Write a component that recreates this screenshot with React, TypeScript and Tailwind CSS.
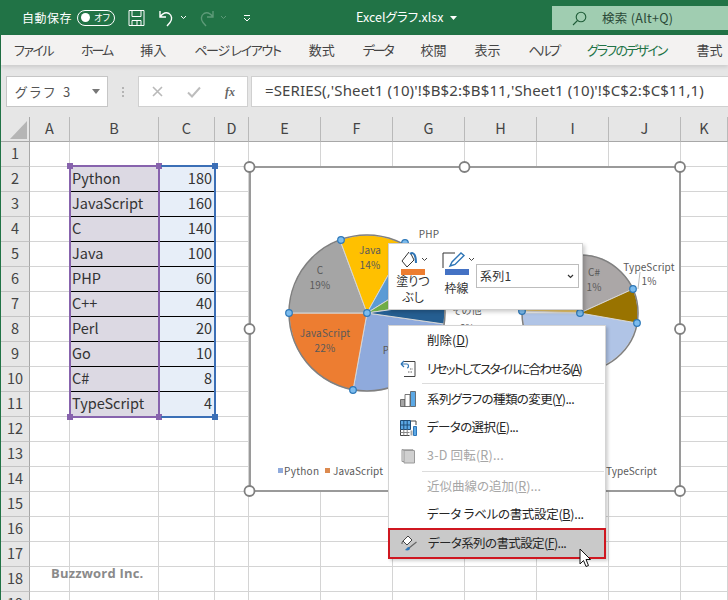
import React from "react";

const colWidths = ["A", "B", "C", "D", "E", "F", "G", "H", "I", "J", "K"];
const data: [string, string][] = [
  ["Python", "180"],
  ["JavaScript", "160"],
  ["C", "140"],
  ["Java", "100"],
  ["PHP", "60"],
  ["C++", "40"],
  ["Perl", "20"],
  ["Go", "10"],
  ["C#", "8"],
  ["TypeScript", "4"],
];
const rows = Array.from({ length: 19 }, (_, i) => i + 1);
const blanks = Array.from({ length: 8 }, (_, i) => i);
const tabs: [string, string][] = [
  ["ファイル", "tracking-[-1.5px]"],
  ["ホーム", "tracking-[-2px]"],
  ["挿入", ""],
  ["ページ レイアウト", "tracking-[-1.3px]"],
  ["数式", ""],
  ["データ", "tracking-[-2.2px]"],
  ["校閲", ""],
  ["表示", ""],
  ["ヘルプ", "tracking-[-2.3px]"],
  ["グラフのデザイン", "tracking-[-1.8px] text-[#217346]"],
  ["書式", "ml-[2px]"],
];

const blueDots: [number, number][] = [
  [91, 73], [39, 146], [103, 223], [117, 146], [155, 76], [272, 144], [330, 146], [383, 122], [387, 156],
];
const whiteDots: [number, number][] = [
  [-0.5, 0], [214.500, 0], [430, 0], [-0.5, 162], [430, 162], [-0.5, 324], [430, 324],
];

function Handle({ c, extra }: { c: string; extra: string }) {
  return <span className={`absolute w-[6px] h-[6px] ${c} ${extra}`} />;
}

function MenuRow({ icon, children, dim, h }: { icon?: React.ReactNode; children: React.ReactNode; dim?: boolean; h: string }) {
  return (
    <div className={`flex items-center whitespace-nowrap ${h} ${dim ? "text-[#a6a6a6]" : "text-[#262626]"}`}>
      <span className="w-[38px] flex justify-center items-center shrink-0">{icon}</span>
      {children}
    </div>
  );
}

export default function App() {
  return (
    <div className="relative w-[728px] h-[600px] overflow-hidden bg-white flex flex-col [font-family:'Noto_Sans_CJK_JP','Noto_Sans',sans-serif] [font-feature-settings:'palt'] text-[#333]">
      {/* title bar */}
      <div className="h-[35px] shrink-0 bg-[#217346] flex text-white">
        <div className="flex items-center pl-[22px] w-[350px] shrink-0">
          <span className="text-[12px] w-[48px] tracking-[0.5px] whitespace-nowrap">自動保存</span>
          <span className="ml-[7px] w-[38px] h-[16px] rounded-full border border-white flex items-center justify-between px-[3px]">
            <span className="w-[9px] h-[9px] rounded-full bg-white" />
            <span className="text-[9px] leading-none pr-[1px]">オフ</span>
          </span>
          <svg className="ml-[13px]" width="17" height="18" viewBox="0 0 17 18" fill="none" stroke="white" strokeWidth="1">
            <path d="M1 1.500h15v15H1zM4 1.500v6h9v-6M4 16.500v-5h9v5M9 12v4" />
          </svg>
          <svg className="ml-[13px]" width="16" height="18" viewBox="0 0 16 18" fill="none" stroke="white" strokeWidth="1.400">
            <path d="M2 2v6h6M2 8c2.500-3.500 6-5 9-3.500 3 1.800 3.500 6 1 9l-3 3.500" />
          </svg>
          <svg className="ml-[6px]" width="7" height="5" viewBox="0 0 7 5" fill="none" stroke="white"><path d="M1 1l2.500 2.500L6 1" /></svg>
          <svg className="ml-[12px]" width="16" height="18" viewBox="0 0 16 18" fill="none" stroke="#5d9a78" strokeWidth="1.400">
            <path d="M14 2v6H8M14 8c-2.500-3.500-6-5-9-3.500-3 1.800-3.500 6-1 9l3 3.500" />
          </svg>
          <svg className="ml-[5px]" width="7" height="5" viewBox="0 0 7 5" fill="none" stroke="#5d9a78"><path d="M1 1l2.500 2.500L6 1" /></svg>
          <svg className="ml-[16px]" width="8" height="8" viewBox="0 0 8 8" fill="none" stroke="white"><path d="M1 1.500h6M1 4l3 3 3-3" /></svg>
        </div>
        <div className="flex items-center gap-[7px] ml-[6px] w-[120px] text-[12.500px] leading-none whitespace-nowrap">
          Excelグラフ.xlsx
          <svg width="7" height="4" viewBox="0 0 7 4" fill="white"><path d="M0 0h7L3.500 4z" /></svg>
        </div>
        <div className="ml-[76px] mt-[6px] flex-1 h-[24px] bg-[#a0cdb1] flex items-center pl-[20px] text-[#2b4a38] text-[12.500px] whitespace-nowrap">
          <svg width="15" height="15" viewBox="0 0 15 15" fill="none" stroke="#1f5c38" strokeWidth="1.100">
            <circle cx="9" cy="6" r="4.800" /><path d="M5.500 9.500L1 14" />
          </svg>
          <span className="ml-[15px] tracking-[0.3px]">検索 (Alt+Q)</span>
        </div>
      </div>

      <div className="flex-1 min-h-0 border-l border-[#217346] flex flex-col">
        {/* tabs */}
        <div className="h-[30px] shrink-0 bg-[#f3f2f1] flex items-center pl-[13px] gap-[28px] text-[13px] text-[#444] whitespace-nowrap relative z-10 shadow-[0_2px_4px_rgba(0,0,0,0.12)]">
          {tabs.map(([t, cls]) => (
            <span key={t} className={cls}>{t}</span>
          ))}
        </div>

        {/* formula bar */}
        <div className="h-[52px] shrink-0 bg-[#e6e6e6] flex pt-[11px] pl-[5px] pb-[10px]">
          <div className="w-[102px] h-[31px] bg-white border border-[#c6c6c6] flex items-center justify-between pl-[8px] pr-[7px] text-[13px] text-[#555] tracking-[2.800px] whitespace-nowrap">
            グラフ 3
            <svg width="8" height="5" viewBox="0 0 8 5" fill="#777"><path d="M0 0h8L4 5z" /></svg>
          </div>
          <div className="w-[30px] flex flex-col items-center justify-center gap-[2px]">
            <span className="w-[2px] h-[2px] bg-[#b4b4b4]" />
            <span className="w-[2px] h-[2px] bg-[#b4b4b4]" />
            <span className="w-[2px] h-[2px] bg-[#b4b4b4]" />
          </div>
          <div className="w-[110px] h-[31px] bg-white border border-[#d0d0d0] flex items-center justify-between pl-[13px] pr-[12px]">
            <svg width="11" height="11" viewBox="0 0 11 11" fill="none" stroke="#b9b9b9" strokeWidth="1.600"><path d="M1 1l9 9M10 1l-9 9" /></svg>
            <svg width="14" height="12" viewBox="0 0 14 12" fill="none" stroke="#bdbdbd" strokeWidth="2"><path d="M1 6.500l4 4L13 1.500" /></svg>
            <span className="text-[12px] italic font-bold [font-family:'Liberation_Serif',serif] text-[#666]">fx</span>
          </div>
          <div className="ml-[3px] flex-1 h-[31px] bg-white border-y border-l border-[#d0d0d0] flex items-center pl-[13px] text-[15px] tracking-[0.13px] text-[#444] whitespace-nowrap overflow-hidden [font-family:'Noto_Sans',sans-serif] pb-[3px]">
            =SERIES(,'Sheet1 (10)'!$B$2:$B$11,'Sheet1 (10)'!$C$2:$C$11,1)
          </div>
        </div>

        {/* sheet */}
        <div className="flex-1 min-h-0 overflow-hidden grid grid-cols-[29px_40px_89px_56px_34px_72px_72px_72px_72px_72px_72px_47px] auto-rows-[25px] text-[14.500px] leading-none">
          <div className="bg-[#e6e6e6] border-r border-b border-[#a8a8a8] relative">
            <svg className="absolute left-[9px] top-[4px]" width="17" height="18" viewBox="0 0 17 18"><path d="M17 0v18H0z" fill="#b5b5b5" /></svg>
          </div>
          {colWidths.map((c) => (
            <div key={c} className="bg-[#e6e6e6] border-r border-b border-r-[#b9b9b9] border-b-[#a8a8a8] flex items-center justify-center text-[#444] pb-[1px]">
              {c}
            </div>
          ))}
          {rows.map((r) => {
            const item = r >= 2 && r <= 11 ? data[r - 2] : null;
            return (
              <React.Fragment key={r}>
                <div className="bg-[#e6e6e6] border-r border-b border-r-[#a8a8a8] border-b-[#c4c4c4] flex items-center justify-center text-[#444] pb-[1px]">
                  {r}
                </div>
                <div className="border-r border-b border-[#d4d4d4]" />
                {item ? (
                  <>
                    <div className="bg-[#dcd9e3] border-b border-black flex items-center pl-[2px] pb-[1px] border-r border-r-[#dcd9e3] whitespace-nowrap">{item[0]}</div>
                    <div className="bg-[#e7eef8] border-b border-black flex items-center justify-end pr-[3px] pb-[1px]">{item[1]}</div>
                  </>
                ) : (
                  <>
                    <div className="border-r border-b border-[#d4d4d4]" />
                    <div className="border-r border-b border-[#d4d4d4]" />
                  </>
                )}
                {blanks.map((b) => (
                  <div key={b} className="border-r border-b border-[#d4d4d4]" />
                ))}
              </React.Fragment>
            );
          })}
        </div>
      </div>

      {/* selection ranges */}
      <div className="absolute left-[69px] top-[165px] w-[91px] h-[253px] border-2 border-[#8763ad]">
        <Handle c="bg-[#8763ad]" extra="-left-[4px] -top-[4px]" />
        <Handle c="bg-[#8763ad]" extra="-right-[4px] -top-[4px]" />
        <Handle c="bg-[#8763ad]" extra="-left-[4px] -bottom-[4px]" />
        <Handle c="bg-[#8763ad]" extra="-right-[4px] -bottom-[4px]" />
      </div>
      <div className="absolute left-[161px] top-[165px] w-[55px] h-[253px] border-2 border-l-0 border-[#3b6fb6]">
        <Handle c="bg-[#3b6fb6]" extra="-right-[4px] -top-[4px]" />
        <Handle c="bg-[#3b6fb6]" extra="-right-[4px] -bottom-[4px]" />
      </div>

      {/* chart */}
      <div className="absolute left-[249px] top-[166px] w-[432px] h-[326px] bg-white border-2 border-[#9a9a9a]" />
      <svg className="absolute left-[250px] top-[167px] overflow-visible" width="431" height="325" viewBox="0 0 431 325">
        <g stroke="#d6d6d6" strokeWidth="1">
          <path d="M117 146L194 157A78 78 0 0 1 103 223Z" fill="#8faadc" />
          <path d="M117 146L39 146A78 78 0 0 0 103 223Z" fill="#ed7d31" />
          <path d="M117 146L90 73A78 78 0 0 0 39 146Z" fill="#a5a5a5" />
          <path d="M117 146L155 78A78 78 0 0 0 90 73Z" fill="#ffc000" />
          <path d="M117 146L183 105A78 78 0 0 0 155 78Z" fill="#5b9bd5" />
          <path d="M117 146L194 135A78 78 0 0 0 183 105Z" fill="#70ad47" />
          <path d="M117 146L194 157A78 78 0 0 0 194 135Z" fill="#255e91" />
          <path d="M330 146L387 156A58 58 0 0 1 272 146Z" fill="#b0c4e6" />
          <path d="M330 146L272 144A58 58 0 0 1 300 96Z" fill="#e8c46a" />
          <path d="M330 146L383 122A58 58 0 0 0 300 96Z" fill="#aba7a7" />
          <path d="M330 146L383 122A58 58 0 0 1 387 156Z" fill="#997300" />
        </g>
        <circle cx="117" cy="146" r="78" fill="none" stroke="#808080" strokeWidth="1.500" />
        <circle cx="330" cy="146" r="58" fill="none" stroke="#808080" strokeWidth="1.500" />
        <path d="M388 122L390 105" stroke="#bdbdbd" fill="none" />

        <g fontSize="10" fill="#595959" textAnchor="middle" letterSpacing="0.15">
          <text x="120" y="87">Java</text>
          <text x="120" y="102">14%</text>
          <text x="70" y="107">C</text>
          <text x="70" y="122">19%</text>
          <text x="75" y="170">JavaScript</text>
          <text x="75" y="185">22%</text>
          <text x="150" y="187">Python</text>
          <text x="179" y="71">PHP</text>
          <text x="217" y="147">その他</text>
          <text x="217" y="165">6%</text>
          <text x="344" y="109">C#</text>
          <text x="344" y="124">1%</text>
          <text x="399" y="104">TypeScript</text>
          <text x="399" y="118">1%</text>
        </g>

        <rect x="28" y="301" width="5" height="5" fill="#8faadc" />
        <text x="34" y="308" fontSize="10" fill="#595959" letterSpacing="0.3">Python</text>
        <rect x="75" y="301" width="5" height="5" fill="#dc8a4f" />
        <text x="83" y="308" fontSize="10" fill="#595959" letterSpacing="0.1">JavaScript</text>
        <text x="356" y="308" fontSize="10" fill="#595959" letterSpacing="0.1">TypeScript</text>

        {blueDots.map(([x, y]) => (
          <circle key={`${x}-${y}`} cx={x} cy={y} r="3.300" fill="#7cbcee" stroke="#2d78b8" strokeWidth="1.200" />
        ))}
        {whiteDots.map(([x, y]) => (
          <circle key={`${x}-${y}`} cx={x} cy={y} r="5" fill="white" stroke="#808080" strokeWidth="1.800" />
        ))}
      </svg>

      {/* mini toolbar */}
      <div className="absolute left-[388px] top-[243px] w-[195px] h-[67px] bg-white border border-[#d0d0d0] shadow-[2px_2px_4px_rgba(0,0,0,0.2)] flex text-[#333] text-[12px] leading-[16px]">
        <div className="w-[48px] ml-[1px] flex flex-col items-center pt-[5px]">
          <div className="flex items-end h-[20px] gap-[3px]">
            <svg width="18" height="18" viewBox="0 0 18 18" fill="none" stroke="#333" strokeWidth="1">
              <path d="M9 1l-7 9 5 6 7-7-3-6" />
              <path d="M10 3c4-3 6 2 6 9" stroke="#2e75b6" strokeWidth="2" />
            </svg>
            <svg className="mb-[7px]" width="7" height="5" viewBox="0 0 7 5" fill="none" stroke="#444"><path d="M1 1l2.500 2.500L6 1" /></svg>
          </div>
          <div className="w-[24px] h-[6px] bg-[#ed7d31] mr-[2px]" />
          <div className="text-center -mt-[2px] -ml-[2px]">塗りつ<br />ぶし</div>
        </div>
        <div className="w-[32px] ml-[2px] flex flex-col items-center pt-[5px] mr-[4px]">
          <div className="flex items-end h-[20px] gap-[2px] ml-[4px]">
            <svg width="24" height="18" viewBox="0 0 24 18" fill="none" stroke="#333" strokeWidth="1">
              <path d="M1 17V2h12" />
              <path d="M8 15l2-4L19 2l3 2.500-9 9z" stroke="#2e75b6" strokeWidth="1.400" />
            </svg>
            <svg className="mb-[7px] shrink-0" width="7" height="5" viewBox="0 0 7 5" fill="none" stroke="#444"><path d="M1 1l2.500 2.500L6 1" /></svg>
          </div>
          <div className="w-[24px] h-[6px] bg-[#4472c4] ml-[1px]" />
          <div className="mt-[5px] ml-[1px] whitespace-nowrap">枠線</div>
        </div>
        <div className="mt-[20px] w-[103px] h-[24px] border border-[#bdbdbd] flex items-center justify-between pl-[3px] pr-[4px] tracking-[0.3px]">
          系列1
          <svg width="7" height="5" viewBox="0 0 7 5" fill="none" stroke="#333" strokeWidth="1.200"><path d="M1 1l2.500 2.500L6 1" /></svg>
        </div>
      </div>

      {/* context menu */}
      <div className="absolute left-[388px] top-[325px] w-[218px] bg-white border border-[#d4d4d4] shadow-[2px_2px_3px_rgba(0,0,0,0.18)] text-[12.500px] leading-none pb-[1px]">
        <MenuRow h="h-[29px]"><span>削除(<u>D</u>)</span></MenuRow>
        <MenuRow
          h="h-[28px]"
          icon={
            <svg width="16" height="18" viewBox="0 0 16 18" fill="none">
              <path d="M4 1.500h11v15H4" stroke="#444" />
              <path d="M1 4l3-3M1 4l3 3M1 4h6c2 0 2 4 0 4" stroke="#2e75b6" strokeWidth="1.200" />
              <path d="M8 12h5M10 9h3" stroke="#666" strokeDasharray="1.500 1" />
            </svg>
          }
        >
          <span className="tracking-[-1.700px]">リセットしてスタイルに合わせる(<u>A</u>)</span>
        </MenuRow>
        <div className="h-px bg-[#dcdcdc] ml-[33px] mr-[1px]" />
        <MenuRow
          h="h-[30px]"
          icon={
            <svg width="16" height="16" viewBox="0 0 16 16" fill="none" stroke="#555" strokeWidth="0.800">
              <path d="M.5 8.500h4.500v7H.5z" fill="#a6a6a6" />
              <path d="M5 3.500h5v12H5z" fill="white" />
              <path d="M10.500 .5h5v15h-5z" fill="#5ba8e5" />
            </svg>
          }
        >
          <span className="tracking-[-0.6px]">系列グラフの種類の変更(<u>Y</u>)...</span>
        </MenuRow>
        <MenuRow
          h="h-[27px]"
          icon={
            <svg width="17" height="16" viewBox="0 0 17 16" fill="none">
              <path d="M.5 .5h10v9H.5z" fill="#5ba8e5" stroke="#1f4e79" />
              <path d="M3.800 .5v9M7.200 .5v9M.5 5h10" stroke="#1f4e79" />
              <path d="M.5 9.500v6h9" stroke="#444" />
              <path d="M3.800 9.500v6M7.200 9.500v6M.5 12.500h9" stroke="#888" />
              <path d="M11 1h5v4" stroke="#444" />
              <path d="M10.500 10.500h2v5h-2z" fill="#a6a6a6" />
              <path d="M13.500 6.500h3v9h-3z" fill="#5ba8e5" stroke="#2e75b6" />
            </svg>
          }
        >
          <span className="tracking-[-0.6px]">データの選択(<u>E</u>)...</span>
        </MenuRow>
        <MenuRow
          h="h-[29px]"
          dim
          icon={
            <svg width="14" height="16" viewBox="0 0 14 16" fill="#ececec" stroke="#9a9a9a">
              <path d="M1 1.500h10v12H1z" />
              <path d="M1 1.500l2 1v12.500h10.500V3L11 1.500M3 2.500h10.500" fill="#d0d0d0" />
            </svg>
          }
        >
          <span className="tracking-[0.2px]">3-D 回転(<u>R</u>)...</span>
        </MenuRow>
        <div className="h-px bg-[#dcdcdc] ml-[33px] mr-[1px] mt-[1px]" />
        <MenuRow h="h-[29px]" dim><span>近似曲線の追加(<u>R</u>)...</span></MenuRow>
        <MenuRow h="h-[27px]"><span className="tracking-[-0.3px]">データ ラベルの書式設定(<u>B</u>)...</span></MenuRow>
        <div className="h-[31px] bg-[#c9c9c9] border-2 border-[#cf1720] flex items-center text-[#262626] -mx-[1px] -mb-[2px]">
          <span className="w-[38px] flex justify-center shrink-0">
            <svg width="17" height="17" viewBox="0 0 17 17" fill="none">
              <path d="M7 1L2 6l4 4 5-5z" fill="white" stroke="#444" />
              <path d="M2 6c-1 1-1 2-1 3" stroke="#444" />
              <path d="M15.500 7L8 13" stroke="#666" strokeWidth="1.300" />
              <path d="M8 12c-2 0-2.500 2-4 3 2 1 5 .5 5-2z" fill="#2e75b6" />
            </svg>
          </span>
          <span className="tracking-[-0.6px]">データ系列の書式設定(<u>F</u>)...</span>
        </div>
      </div>

      {/* pointer */}
      <svg className="absolute left-[579px] top-[548px]" width="13" height="21" viewBox="0 0 13 21">
        <path d="M1 1v15l3.500-3.500 2.500 6 2.500-1-2.500-6H11.500z" fill="white" stroke="#111" strokeWidth="1" />
      </svg>

      {/* watermark */}
      <span className="absolute left-[51px] top-[564px] text-[13px] font-bold text-[#8a8a8a] leading-[18px] tracking-[0.2px] [font-family:'Open_Sans',sans-serif] whitespace-nowrap">Buzzword Inc.</span>
    </div>
  );
}
